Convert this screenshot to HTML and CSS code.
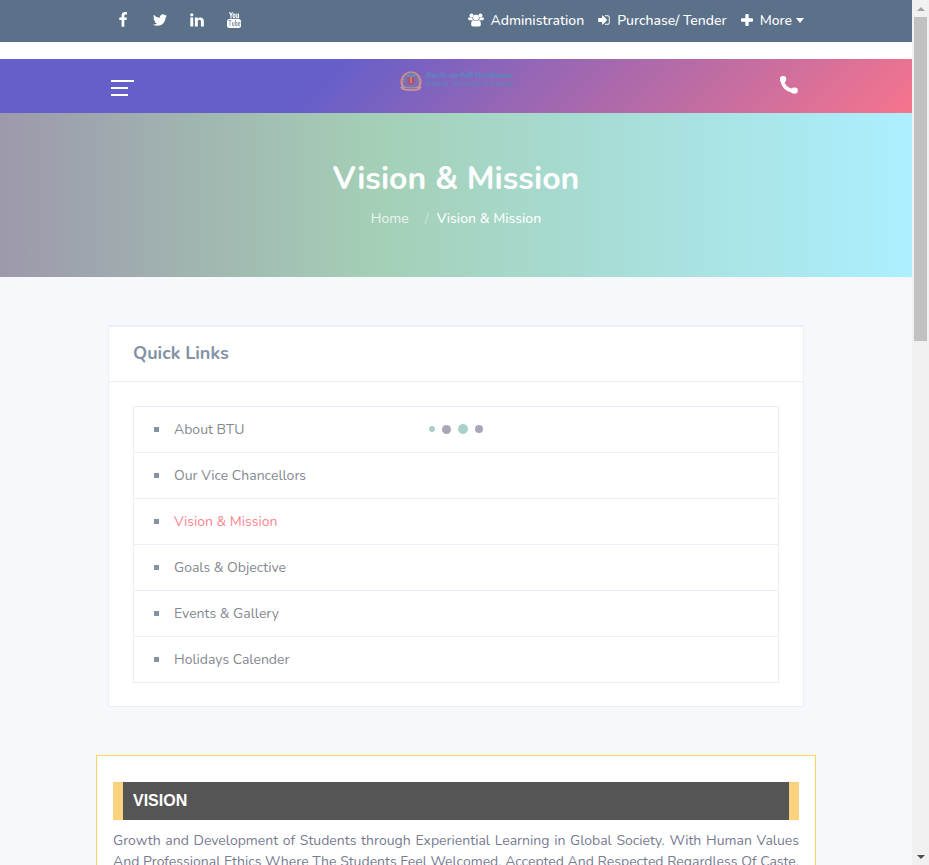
FILE: index.html
```html
<!DOCTYPE html>
<html lang="en">
<head>
<meta charset="utf-8">
<meta name="viewport" content="width=device-width, initial-scale=1">
<title>Vision &amp; Mission</title>
<link rel="stylesheet" href="styles.css">
</head>
<body>
<div class="page">
  <div class="topbar">
    <div class="container topbar-row">
      <nav class="social" aria-label="Social">
        <a href="#" aria-label="Facebook"><svg class="icon" viewBox="0 0 1792 1792"><path d="M1343 12v264h-157q-86 0-116 36t-30 108v189h293l-39 296h-254v759h-306v-759h-255v-296h255v-218q0-186 104-288.500t277-102.500q147 0 228 12z"/></svg></a>
        <a href="#" aria-label="Twitter"><svg class="icon" viewBox="0 0 1792 1792"><path d="M1684 408q-67 98-162 167 1 14 1 42 0 130-38 259.500t-115.500 248.500-184.500 210.500-258 146-323 54.500q-271 0-496-145 35 4 78 4 225 0 401-138-105-2-188-64.500t-114-159.500q33 5 61 5 43 0 85-11-112-23-185.500-111.500t-73.500-205.500v-4q68 38 146 41-66-44-105-115t-39-154q0-88 44-163 121 149 294.500 238.500t371.500 99.500q-8-38-8-74 0-134 94.500-228.500t228.500-94.500q140 0 236 102 109-21 205-78-37 115-142 178 93-10 186-50z"/></svg></a>
        <a href="#" aria-label="LinkedIn"><svg class="icon" viewBox="0 0 1792 1792"><path d="M477 625v991h-330v-991h330zm21-306q1 73-50.500 122t-135.500 49h-2q-82 0-132-49t-50-122q0-74 51.500-122.500t134.500-48.500 133 48.500 51 122.500zm1166 729v568h-329v-530q0-105-40.500-164.500t-126.500-59.500q-63 0-105.500 34.500t-63.500 85.500q-11 30-11 81v553h-329q2-399 2-647t-1-296l-1-48h329v144h-2q20-32 41-56t56.500-52 87-43.500 114.500-15.500q171 0 275 113.500t104 332.500z"/></svg></a>
        <a href="#" aria-label="YouTube"><svg class="icon" viewBox="0 0 16 16"><rect x="1" y="7" width="14" height="9" rx="2.500"/><g fill="none" stroke="#fff" stroke-width="1.100"><path d="M3.500 0l1.500 3.500V6.500M6.500 0L5 3.500"/><rect x="7.200" y="2" width="1.800" height="3.800" rx=".8"/><path d="M10.800 1.500v4.300h1.700V1.500"/></g><g fill="none" stroke="#5b7089" stroke-width=".6"><path d="M2.500 8.500h3M4 8.500v5.500M6.500 10v3.500h1.500V10M9.500 8v5.700h1.500v-3.300H9.500M14 13.500h-1.600v-3.200h1.500v1.700h-1.500"/></g></svg></a>
      </nav>
      <nav class="quick" aria-label="Utility">
        <a href="#"><svg class="icon" viewBox="0 0 18 16"><circle cx="4" cy="3" r="2.300"/><circle cx="14" cy="3" r="2.300"/><path d="M0 6.500Q0 4.800 1.500 4.800L5 5.500Q4.800 7 5.800 8.400H2.200Q0 8.400 0 6.500zM18 6.500Q18 4.800 16.500 4.800L13 5.500Q13.200 7 12.200 8.400h3.600Q18 8.400 18 6.500z"/><circle cx="9" cy="5.300" r="3.300"/><path d="M3.500 13Q3.500 8.300 6.200 8.300q2.800 1.700 5.600 0 2.700 0 2.700 4.700 0 2.300-2.200 2.300H5.700Q3.500 15.300 3.500 13z"/></svg>Administration</a>
        <a href="#"><svg class="icon small" viewBox="100 128 1600 1536"><path d="M1312 896q0 26-19 45l-544 544q-19 19-45 19t-45-19-19-45v-288h-448q-26 0-45-19t-19-45v-384q0-26 19-45t45-19h448v-288q0-26 19-45t45-19 45 19l544 544q19 19 19 45zm352-352v704q0 119-84.500 203.500t-203.500 84.500h-320q-32 0-32-32v-64q0-32 32-32h320q66 0 113-47t47-113v-704q0-66-47-113t-113-47h-320q-32 0-32-32v-64q0-32 32-32h320q119 0 203.500 84.500t84.500 203.500z"/></svg>Purchase/ Tender</a>
        <button type="button"><svg class="icon small" viewBox="192 128 1408 1408"><path d="M1600 736v192q0 40-28 68t-68 28h-416v416q0 40-28 68t-68 28h-192q-40 0-68-28t-28-68v-416h-416q-40 0-68-28t-28-68v-192q0-40 28-68t68-28h416v-416q0-40 28-68t68-28h192q40 0 68 28t28 68v416h416q40 0 68 28t28 68z"/></svg>More<span class="caret"></span></button>
      </nav>
    </div>
  </div>

  <header class="header">
    <div class="container header-row">
      <button type="button" class="burger" aria-label="Menu"><span></span><span></span><span></span></button>
      <a href="#" class="logo">
        <svg class="crest" viewBox="0 0 24 24" aria-hidden="true"><path d="M4 18A9 9 0 1 1 20 18" fill="none" stroke="#c98f92" stroke-width="3"/><path d="M5 17A8 8 0 1 1 19 17" fill="none" stroke="#5b4fa5" stroke-width=".8" stroke-dasharray="1 1"/><circle cx="12" cy="12" r="6.500" fill="#8a67ac" stroke="#5e8cba" stroke-width="1"/><path d="M9 8h6v6q-1 3-3 3t-3-3z" fill="#b0516f"/><path d="M8 8h8" stroke="#45a5bd" stroke-width="1.500"/><path d="M12 9v6" stroke="#e3a07d"/><path d="M1 19l4-1q7 3 14 0l4 1-3 3q-8 2-16 0z" fill="#c99898"/><path d="M5 20q7 2 14 0" fill="none" stroke="#765da5" stroke-width=".8"/></svg>
        <span class="logo-text"><span class="logo-hindi" lang="hi">बीकानेर तकनीकी विश्वविद्यालय</span><span>Bikaner Technical University</span></span>
      </a>
      <a href="#" class="phone" aria-label="Call"><svg viewBox="0 0 18 18"><path d="M2 3Q3 13.500 14.500 15.500" fill="none" stroke="#fff" stroke-width="3.400"/><rect x="0" y="0" width="6.200" height="6.400" rx="2.800"/><rect x="11" y="11.500" width="6.800" height="6" rx="2.800"/></svg></a>
    </div>
  </header>

  <section class="banner">
    <h1>Vision &amp; Mission</h1>
    <nav class="crumbs" aria-label="Breadcrumb"><a href="#">Home</a><span class="slash">/</span><span>Vision &amp; Mission</span></nav>
  </section>

  <main class="container content">
    <section class="card">
      <h2>Quick Links</h2>
      <ul class="links">
        <li><a href="#">About BTU</a></li>
        <li><a href="#">Our Vice Chancellors</a></li>
        <li class="active"><a href="#">Vision &amp; Mission</a></li>
        <li><a href="#">Goals &amp; Objective</a></li>
        <li><a href="#">Events &amp; Gallery</a></li>
        <li><a href="#">Holidays Calender</a></li>
      </ul>
    </section>
    <section class="vision">
      <h3>VISION</h3>
      <p>Growth and Development of Students through Experiential Learning in Global Society. With Human Values And Professional Ethics Where The Students Feel Welcomed, Accepted And Respected Regardless Of Caste,</p>
    </section>
  </main>
</div>

<div class="scrollbar" aria-hidden="true">
  <span class="arrow up"></span><span class="thumb"></span><span class="arrow down"></span>
</div>
<div class="loader" aria-hidden="true"><span></span><span></span><span></span><span></span></div>
</body>
</html>
```
FILE: styles.css
```css
* { box-sizing: border-box; }

body {
  margin: 0;
  height: 100vh;
  display: grid;
  grid-template-columns: minmax(0, 1fr) 17px;
  overflow: hidden;
  background: #f6f8fc;
  color: #8492a6;
  font: 14px/21px Nunito, Lato, "Open Sans", sans-serif;
}

a { color: inherit; text-decoration: none; }
button { border: 0; padding: 0; background: none; color: inherit; font: inherit; }
svg { display: block; fill: currentColor; }

.page { height: 100vh; overflow-y: auto; scrollbar-width: none; }
.container { width: 100%; max-width: 720px; margin: 0 auto; padding: 0 12px; }

.topbar { background: #5b7089; color: #fff; border-bottom: 17px solid #fff; }
.topbar-row { display: flex; justify-content: space-between; height: 42px; padding-bottom: 2px; align-items: center; }
.social { display: flex; gap: 21px; padding-left: 7px; }
.icon { width: 16px; height: 16px; flex: none; }
.small { width: 12px; height: 12px; }
.quick { display: flex; gap: 14px; font-weight: 500; }
.quick a, .quick button { display: flex; align-items: center; gap: 7px; }
.caret { border: 4px solid transparent; border-top: 5px solid #fff; border-bottom: 0; margin-left: -3px; }

.header { color: #fff; background: linear-gradient(135deg, #655fca 35%, #f8758b 101%); }
.header-row { display: grid; grid-template-columns: 1fr auto 1fr; height: 54px; align-items: center; }
.burger { display: grid; gap: 5px; width: 23px; margin-left: 3px; padding-top: 4px; }
.burger span { height: 2px; width: 17px; background: #fff; }
.burger span:first-child { width: 23px; }
.logo { display: flex; align-items: center; gap: 2px; padding-bottom: 12px; color: #5f83be; }
.crest { width: 24px; height: 24px; }
.logo-text { display: grid; font: 7px/8px "Liberation Sans", "Noto Sans", sans-serif; }
.logo-hindi { font-weight: 700; }
.phone { justify-self: end; width: 18px; margin-right: 6px; padding-bottom: 2px; }

.banner {
  height: 164px;
  padding-top: 46px;
  text-align: center;
  color: #fff;
  background: linear-gradient(90deg, #9d99ab, #a4cfb6 41%, #acefff);
}
h1 { margin: 0 0 9px; font-size: 32px; line-height: 40px; font-weight: 700; }
.crumbs { display: flex; justify-content: center; font-weight: 500; }
.crumbs a { opacity: .8; font-weight: 400; }
.slash { opacity: .4; margin: 0 8px 0 16px; font-weight: 400; }

.content { padding-top: 48px; }
.card { background: #fff; border: 1px solid #e9eef7; border-top-width: 2px; border-radius: 3px; margin-bottom: 48px; }
h2 { margin: 0; padding: 13px 24px 15px; border-bottom: 1px solid #e9eef7; font-size: 18px; line-height: 26px; font-weight: 700; }
.links { margin: 24px 24px 23px; padding: 0; list-style: none; border: 1px solid #e9eef7; }
.links li { display: flex; align-items: center; gap: 15px; height: 46px; padding: 0 20px; border-bottom: 1px solid #e9eef7; }
.links li:last-child { border-bottom: 0; height: 45px; }
.links li::before { content: ""; width: 5px; height: 5px; background: #8492a6; }
.links a { font-weight: 400; color: #84888f; }
.links .active a { color: #fb858f; }

.vision { margin: 0 -12px; padding: 26px 16px; background: #fff; border: 1px solid #fbd65d; }
h3 { margin: 0 0 10px; padding: 0 10px; background: #555; border: solid #fad27d; border-width: 0 10px; color: #fff; font: 700 16px/38px "Liberation Sans", sans-serif; }
.vision p { margin: 0; font-weight: 400; color: #777b8f; text-align: justify; text-align-last: justify; }

.scrollbar { display: flex; flex-direction: column; align-items: center; height: 100vh; padding: 6px 0; background: #f1f1f1; }
.arrow { border: 4px solid transparent; }
.up { border-top: 0; border-bottom-color: #a3a3a3; margin: 1px 0 6px; }
.down { border-bottom: 0; border-top-color: #505050; margin-top: auto; }
.thumb { width: 13px; height: 324px; background: #c1c1c1; }

.loader { position: fixed; inset: 0 17px 0 0; display: flex; justify-content: center; align-items: center; gap: 7px; padding-bottom: 7px; pointer-events: none; }
.loader span { width: 9px; height: 9px; border-radius: 50%; background: #a9a6b8; }
.loader span:first-child { width: 6px; height: 6px; background: #a8d1cc; }
.loader span:nth-child(3) { width: 10px; height: 10px; background: #a8d1cc; }
.loader span:last-child { width: 8px; height: 8px; }
```
